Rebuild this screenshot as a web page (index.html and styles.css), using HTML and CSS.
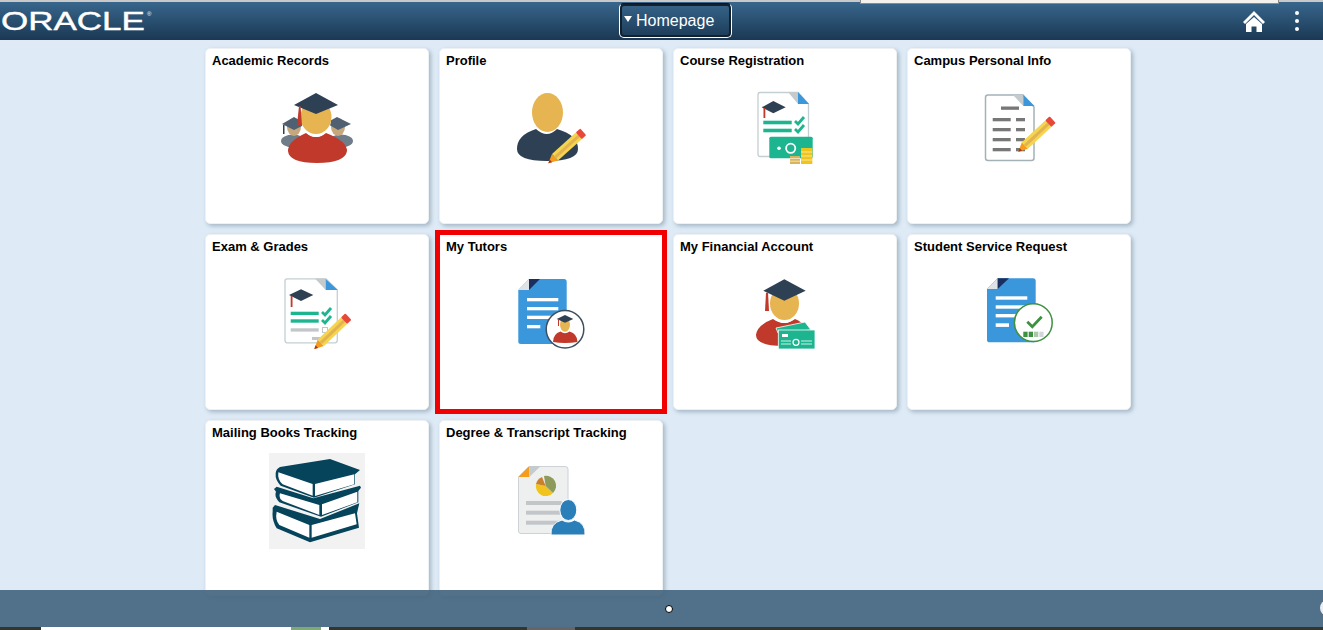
FILE: index.html
```html
<!DOCTYPE html>
<html lang="en">

<head>
    <meta charset="UTF-8">
    <meta name="viewport" content="width=device-width, initial-scale=1.0">
    <title>Homepage</title>
    <link rel="stylesheet" href="styles.css">
</head>

<body>
    <!-- shared icon parts -->
    <svg class="sprite" aria-hidden="true">
        <defs>
            <g id="pencil">
                <path d="M0 0 L9 -4.5 V4.5 Z" fill="#f59c1a" />
                <path d="M0 0 L3.5 -1.8 V1.8 Z" fill="#a8321f" />
                <rect x="9" y="-4.5" width="32" height="9" fill="#f6d54e" />
                <rect x="9" y="-1.4" width="32" height="3" fill="#e3b352" />
                <rect x="41" y="-4.5" width="6" height="9" rx="1" fill="#e8483a" />
            </g>
        </defs>
    </svg>

    <header class="topbar">
        <div class="logo"><span class="logo-text">ORACLE</span><span class="logo-reg">®</span></div>
        <button class="home-btn" type="button"><span class="caret"></span>Homepage</button>
        <div class="actions">
            <svg class="home-icon" viewBox="0 0 22 21">
                <path d="M11 0 L22 11 L20 13 L11 4 L2 13 L0 11 Z" fill="#fff" />
                <path d="M11 6 L19 13 V21 H13.5 V15.5 H8.5 V21 H3 V13 Z" fill="#fff" />
            </svg>
            <div class="dots"><i></i><i></i><i></i></div>
        </div>
    </header>

    <div class="popup-edge"></div>

    <main class="tiles">
        <section class="tile">
            <h3>Academic Records</h3>
            <svg class="tile-icon" viewBox="0 0 96 96">
                <ellipse cx="24" cy="60" rx="12" ry="6.500" fill="#6f7d8a" />
                <ellipse cx="72" cy="60" rx="12" ry="6.500" fill="#6f7d8a" />
                <ellipse cx="25" cy="46" rx="7" ry="9" fill="#c7a77c" />
                <ellipse cx="69" cy="46" rx="7" ry="9" fill="#c7a77c" />
                <path d="M13 43 L25 36 L37 43 L25 49 Z" fill="#4f6072" />
                <path d="M57 42 L68 36 L82 43 L69 49 Z" fill="#4f6072" />
                <rect x="14" y="44" width="1.500" height="9" fill="#2e4053" />
                <path d="M37 52 Q47 60 57 52 Q78 60 78 70 Q76 82 48 82 Q20 82 19 70 Q19 60 37 52 Z" fill="#c0392b" />
                <ellipse cx="47" cy="38" rx="15" ry="18" fill="#fff" />
                <ellipse cx="47" cy="36" rx="15.500" ry="17" fill="#e6b450" />
                <path d="M25 24 L47 12 L69 24 L47 33 Z" fill="#2e4053" />
                <path d="M30 25 L31.500 25 L33 44 H28 Z" fill="#c0392b" />
            </svg>
        </section>
        <section class="tile">
            <h3>Profile</h3>
            <svg class="tile-icon" viewBox="0 0 96 96">
                <path d="M33 48 Q44 58 54 48 Q75 54 75 68 Q75 80 44 80 Q14 80 14 68 Q14 54 33 48 Z" fill="#2e4053" />
                <ellipse cx="44.500" cy="31.500" rx="15.500" ry="19.500" fill="#e6b450" />
                <use href="#pencil" transform="translate(45.300 82.300) rotate(-42)" />
            </svg>
        </section>
        <section class="tile">
            <h3>Course Registration</h3>
            <svg class="tile-icon" viewBox="0 0 96 96">
                <path d="M23 11.500 H61 L71.500 23 V73 Q71.500 75.500 69 75.500 H23 Q21 75.500 21 73 V14 Q21 11.500 23 11.500 Z" fill="#fff" stroke="#c4cfd3" stroke-width="1.300" />
                <path d="M51 11 H61 V23 Z" fill="#c5cacd" />
                <path d="M61 11 L72 23 H61 Z" fill="#3a97dc" />
                <path d="M24.700 26.300 L36.300 20 L48.700 26.300 L36.300 32.300 Z" fill="#2e4053" />
                <rect x="26.500" y="27" width="1.800" height="10" fill="#c0392b" />
                <rect x="26.300" y="39.700" width="28.400" height="3.600" fill="#1db58f" />
                <rect x="26.300" y="47.700" width="28.400" height="3.600" fill="#1db58f" />
                <path d="M58 40 L61 43 L67 36 M58 48 L61 51 L67 44" fill="none" stroke="#1db58f" stroke-width="2.800" />
                <rect x="32.300" y="55.700" width="43.400" height="21.600" rx="1.500" fill="#1db58f" />
                <circle cx="53.700" cy="67.300" r="4.600" fill="none" stroke="#fff" stroke-width="1.800" />
                <circle cx="42" cy="67.300" r="1.800" fill="#fff" />
                <rect x="53" y="75" width="10" height="8" fill="#d9b45a" />
                <path d="M53 77.500 H63 M53 80.200 H63" stroke="#fff" stroke-width=".6" />
                <rect x="64" y="67" width="11.300" height="16" fill="#f0c419" />
                <path d="M64 71 H75.300 M64 75 H75.300 M64 79 H75.300" stroke="#fff" stroke-width=".6" />
            </svg>
        </section>
        <section class="tile">
            <h3>Campus Personal Info</h3>
            <svg class="tile-icon" viewBox="0 0 96 96">
                <path d="M17 14 H52 L63 26 V77 Q63 79.500 60.500 79.500 H17 Q14.500 79.500 14.500 77 V16.500 Q14.500 14 17 14 Z" fill="#fff" stroke="#a3b2b7" stroke-width="1.500" />
                <path d="M42 14 H52.300 V25 Z" fill="#c5cacd" />
                <path d="M52.300 14 L63.500 25 H52.300 Z" fill="#3a97dc" />
                <g fill="#777">
                    <rect x="30" y="25.500" width="18" height="3.300" />
                    <rect x="21.700" y="37" width="18" height="3.300" />
                    <rect x="45" y="37" width="9" height="3.300" />
                    <rect x="21.700" y="47" width="18" height="3.300" />
                    <rect x="45" y="47" width="9" height="3.300" />
                    <rect x="21.700" y="57" width="18" height="3.300" />
                    <rect x="45" y="57" width="9" height="3.300" />
                    <rect x="21.700" y="67" width="18" height="3.300" />
                    <rect x="45" y="67" width="9" height="3.300" />
                </g>
                <use href="#pencil" transform="translate(47.300 70.700) rotate(-43)" />
            </svg>
        </section>

        <section class="tile">
            <h3>Exam &amp; Grades</h3>
            <svg class="tile-icon" viewBox="0 0 96 96">
                <path d="M18 11.800 H57 L68.300 23 V73 Q68.300 75.800 66 75.800 H18 Q16 75.800 16 73 V14 Q16 11.800 18 11.800 Z" fill="#fff" stroke="#c4cfd3" stroke-width="1.300" />
                <path d="M46 11.500 H56.700 V23 Z" fill="#c5cacd" />
                <path d="M56.700 12 L68.700 23 H56.700 Z" fill="#3a97dc" />
                <path d="M20 28 L32 22.300 L44.300 28 L32 34 Z" fill="#2e4053" />
                <rect x="21.700" y="29" width="1.800" height="11" fill="#c0392b" />
                <rect x="21.700" y="44.700" width="28" height="3.400" fill="#1db58f" />
                <rect x="21.700" y="52.300" width="28" height="3.400" fill="#1db58f" />
                <path d="M53 45 L56 48 L62 41 M53 53 L56 56 L62 49" fill="none" stroke="#1db58f" stroke-width="2.800" />
                <rect x="21.700" y="61.300" width="28" height="3.300" fill="#c2c6c9" />
                <rect x="53.500" y="60.500" width="5" height="5" fill="none" stroke="#c2c6c9" />
                <rect x="43" y="70" width="10" height="3" fill="#c2c6c9" />
                <use href="#pencil" transform="translate(45.300 82) rotate(-43.500)" />
            </svg>
        </section>
        <section class="tile tile-active">
            <h3>My Tutors</h3>
            <svg class="tile-icon" viewBox="0 0 96 96">
                <path d="M26 12 H61 Q63.700 12 63.700 14.700 V74.500 Q63.700 77 61 77 H18 Q15.300 77 15.300 74.500 V23 Z" fill="#3a97dc" />
                <path d="M15.300 23 L26 12 V23 Z" fill="#dde3e6" />
                <path d="M26 12 H37 L26 23 Z" fill="#1b2f5e" />
                <g fill="#fff">
                    <rect x="24" y="31" width="31.300" height="3.300" />
                    <rect x="24" y="40" width="31.300" height="3.300" />
                    <rect x="24" y="48.700" width="31.300" height="3.300" />
                    <rect x="24" y="58" width="13.300" height="3.300" />
                </g>
                <circle cx="62" cy="62.300" r="18.800" fill="#fff" stroke="#3d5060" stroke-width="1.500" />
                <path d="M50 75 Q50 67 57.500 64.500 Q62 68 66.500 64.500 Q74.500 67 74.500 75 Q62 77 50 75 Z" fill="#c0392b" />
                <ellipse cx="62" cy="57.700" rx="5" ry="7" fill="#e6b450" />
                <path d="M53.700 52 L62 48 L70.300 52 L62 55.700 Z" fill="#2e4053" />
                <rect x="55" y="52" width="1" height="7" fill="#c0392b" />
            </svg>
        </section>
        <section class="tile">
            <h3>My Financial Account</h3>
            <svg class="tile-icon" viewBox="0 0 96 96">
                <path d="M36 52 Q47 60 58 52 Q72 58 72 70 Q72 79 47 79 Q19 79 19 68 Q20 58 36 52 Z" fill="#c0392b" />
                <ellipse cx="47.500" cy="39" rx="14.500" ry="17" fill="#fff" />
                <ellipse cx="47.500" cy="36.500" rx="14.500" ry="16.500" fill="#e6b450" />
                <path d="M26.300 23.700 L47.300 12.300 L68.700 23.700 L47.300 33.700 Z" fill="#2e4053" />
                <path d="M29 26 L31 25 L32 44 H28 Z" fill="#c0392b" />
                <path d="M39 61 L68 55 L74 63 L41 66 Z" fill="#1db58f" stroke="#fff" stroke-width=".8" />
                <rect x="41.300" y="63" width="36.700" height="19" fill="#1db58f" stroke="#fff" stroke-width=".8" />
                <rect x="45" y="67" width="6" height="3" fill="#fff" />
                <circle cx="59" cy="75.300" r="3" fill="none" stroke="#fff" stroke-width="1.200" />
                <path d="M44 74 H54 M44 77 H54 M64 74 H75 M64 77 H75" stroke="#fff" stroke-width=".8" />
            </svg>
        </section>
        <section class="tile">
            <h3>Student Service Request</h3>
            <svg class="tile-icon" viewBox="0 0 96 96">
                <path d="M26.500 11.300 H62 Q64.700 11.300 64.700 14 V72.700 Q64.700 75.300 62 75.300 H18.700 Q16 75.300 16 72.700 V22 Z" fill="#3a97dc" />
                <path d="M16 22 L26.700 11.300 V22 Z" fill="#dde3e6" />
                <path d="M26.700 11.300 H38 L26.700 22 Z" fill="#1b2f5e" />
                <g fill="#fff">
                    <rect x="24.700" y="29.300" width="31.600" height="3.400" />
                    <rect x="24.700" y="38.300" width="31.600" height="3.400" />
                    <rect x="24.700" y="47" width="31.600" height="3.400" />
                    <rect x="24.700" y="56.300" width="13.300" height="3.600" />
                </g>
                <circle cx="62.300" cy="55.700" r="18.900" fill="#fff" stroke="#3e9140" stroke-width="1.500" />
                <path d="M56.300 54.700 L61.300 59.700 L70.700 49.700" fill="none" stroke="#3e9140" stroke-width="2.800" />
                <rect x="52.300" y="64.700" width="4.300" height="5.300" fill="#3e9140" />
                <rect x="57.700" y="64.700" width="4.300" height="5.300" fill="#3e9140" />
                <rect x="63" y="64.700" width="4.300" height="5.300" fill="#a9c7aa" />
                <rect x="68.300" y="64.700" width="4.300" height="5.300" fill="#d3d6d8" />
            </svg>
        </section>

        <section class="tile">
            <h3>Mailing Books Tracking</h3>
            <svg class="tile-icon" viewBox="0 0 96 96">
                <rect width="96" height="96" fill="#f2f2f2" />
                <g transform="translate(-9 -8) scale(.3333)">
                    <path d="M60 66 L210 42 L300 75 L285 88 V118 L162 158 L62 122 Q45 105 47 85 Q48 72 60 66 Z" fill="#05445a" />
                    <path d="M55 82 Q52 105 68 118 L158 152 V117 Z M165 117 L283 88 V118 L165 153 Z" fill="#fff" />
                    <path d="M42 132 L50 125 L160 160 L300 122 L303 128 L295 138 V172 L183 215 L58 172 Q42 155 48 140 Z" fill="#05445a" />
                    <path d="M60 145 Q55 160 68 168 L178 210 V180 Z M186 178 L292 140 V172 L186 210 Z" fill="#fff" />
                    <path d="M38 188 L45 180 L180 222 L298 175 L291 205 L297 248 L150 292 L50 250 Q35 225 38 200 Z" fill="#05445a" />
                    <path d="M50 200 Q45 225 58 240 L148 278 V240 Z M155 240 L285 205 L290 238 L155 278 Z" fill="#fff" />
                </g>
            </svg>
        </section>
        <section class="tile">
            <h3>Degree &amp; Transcript Tracking</h3>
            <svg class="tile-icon" viewBox="0 0 96 96">
                <path d="M26 13.500 H62 Q65 13.500 65 16 V78 Q65 80.500 62 80.500 H18 Q15.500 80.500 15.500 78 V24 Z" fill="#eef0f0" stroke="#ccd2d5" />
                <path d="M15.300 24 L26.300 13 V24 Z" fill="#f59c1a" />
                <path d="M26.300 13 H37.700 L26.300 24 Z" fill="#c5cacd" />
                <path d="M42.700 33 L50 40 A10 10 0 0 1 33 31 Z" fill="#f2c31c" />
                <path d="M42.700 33 L41 23 A10 10 0 0 1 50 40 Z" fill="#8c9a5b" />
                <path d="M42.700 33 L33 31 A10 10 0 0 1 39 24 Z" fill="#c9802e" />
                <rect x="23" y="48" width="35.700" height="4" fill="#c2c6c9" />
                <rect x="23" y="57.700" width="35.700" height="4" fill="#c2c6c9" />
                <rect x="23" y="67.700" width="35.700" height="4" fill="#c2c6c9" />
                <path d="M48 82 Q47 70 59 67 Q65.300 71 71.500 67 Q83 70 82 82 Z" fill="#2b7fb8" stroke="#fff" />
                <ellipse cx="65.300" cy="57" rx="8.500" ry="10.500" fill="#2b7fb8" stroke="#fff" />
            </svg>
        </section>
    </main>

    <footer class="pager">
        <div class="pager-bar">
            <span class="page-dot"></span>
            <span class="page-next"></span>
        </div>
        <div class="taskbar">
            <span class="task-white"><span class="task-green"></span></span>
            <span class="task-grey"></span>
        </div>
    </footer>
</body>

</html>
```

FILE: styles.css
```css
body {
    font-family: "Liberation Sans", Arial, sans-serif;
    margin: 0;
    padding: 0;
    height: 630px;
    overflow: hidden;
    background-color: #deebf7;
    color: black;
}

.sprite {
    display: block;
    width: 0;
    height: 0;
}

/* Top bar */
.topbar {
    display: grid;
    grid-template-columns: 619px 113px 1fr;
    align-items: center;
    height: 38px;
    border-top: 2px solid #c9c9c9;
    background: linear-gradient(to bottom, #38668c, #1a3853);
}

.logo {
    display: flex;
    align-items: flex-start;
    padding-left: 1px;
    color: white;
}

.logo-text {
    display: block;
    width: 146px;
    font-size: 25px;
    line-height: 26px;
    transform: scaleX(1.4);
    transform-origin: left;
    -webkit-text-stroke: 0.4px white;
}

.logo-reg {
    font-size: 6px;
    line-height: 8px;
    margin-top: 2px;
}

.home-btn {
    display: flex;
    align-items: center;
    align-self: start;
    height: 35px;
    margin-top: 1px;
    padding: 0 0 0 4px;
    background: transparent;
    border: 1px solid white;
    border-top-color: #111;
    border-radius: 5px;
    box-shadow: inset 0 0 0 2px #14202c;
    color: white;
    font-family: inherit;
    font-size: 16px;
}

.caret {
    width: 0;
    height: 0;
    margin: -4px 4px 0 0;
    border-left: 4px solid transparent;
    border-right: 4px solid transparent;
    border-top: 6px solid white;
}

.actions {
    display: flex;
    justify-content: flex-end;
    align-items: center;
    gap: 30px;
    padding-right: 24px;
}

.home-icon {
    width: 22px;
    height: 21px;
}

.dots {
    display: flex;
    flex-direction: column;
    gap: 4px;
}

.dots i {
    display: block;
    width: 4px;
    height: 4px;
    border-radius: 50%;
    background: white;
}

/* window edge poking in from above */
.popup-edge {
    position: absolute;
    top: 0;
    left: 860px;
    width: 417px;
    height: 3px;
    background: #f4f1ec;
    border: 1px solid #8a8a8a;
    border-top: none;
}

/* Tile grid */
.tiles {
    display: grid;
    grid-template-columns: repeat(4, 224px);
    grid-auto-rows: 176px;
    gap: 10px;
    margin: 8px 0 0 205px;
}

.tile {
    display: flex;
    flex-direction: column;
    align-items: center;
    box-sizing: border-box;
    background: white;
    border: 1px solid #eef1f4;
    border-radius: 5px;
    box-shadow: 2px 2px 4px rgba(60, 80, 100, 0.35);
}

.tile h3 {
    align-self: flex-start;
    margin: 0;
    padding: 4px 6px 0;
    height: 28px;
    box-sizing: border-box;
    font-size: 13px;
    line-height: 16px;
    font-weight: bold;
}

.tile-icon {
    display: block;
    width: 96px;
    height: 96px;
    margin-top: 4px;
}

.tile-active {
    outline: 4px solid #f00000;
    border-color: #f00000;
    border-radius: 0;
    box-shadow: none;
}

/* Bottom pager */
.pager {
    position: fixed;
    left: 0;
    right: 0;
    bottom: 0;
    display: flex;
    flex-direction: column;
}

.pager-bar {
    position: relative;
    display: flex;
    justify-content: center;
    align-items: center;
    height: 37px;
    padding-left: 15px;
    background: rgba(70, 102, 128, 0.93);
}

.page-dot {
    width: 6px;
    height: 6px;
    background: white;
    border: 1px solid black;
    border-radius: 50%;
}

.page-next {
    position: absolute;
    left: 1320px;
    top: 10px;
    width: 16px;
    height: 16px;
    border-radius: 50%;
    background: #e9eef2;
}

.taskbar {
    display: flex;
    height: 3px;
    padding-left: 41px;
    background: #33362f;
}

.task-white {
    display: block;
    width: 288px;
    padding-left: 250px;
    box-sizing: border-box;
    background: white;
}

.task-green {
    display: block;
    width: 30px;
    height: 3px;
    background: #7fa872;
}

.task-grey {
    width: 48px;
    margin-left: 198px;
    background: #666;
}
```
